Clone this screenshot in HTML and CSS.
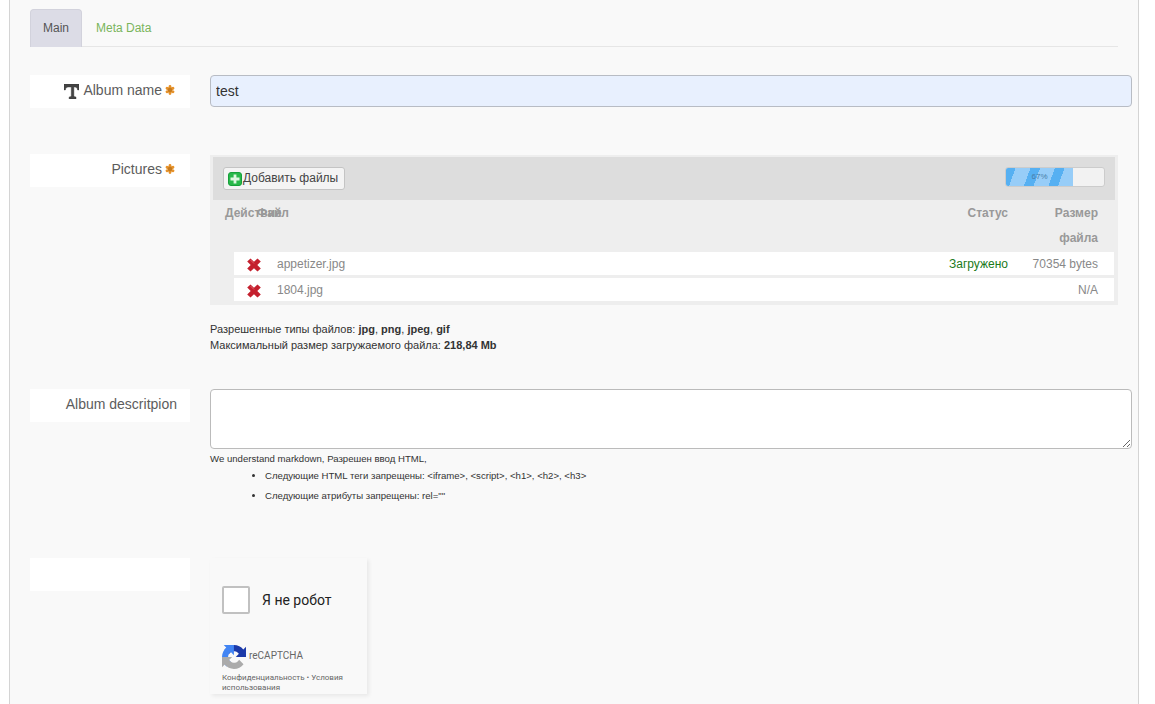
FILE: index.html
```html
<!DOCTYPE html>
<html lang="en">
<head>
<meta charset="utf-8">
<title>Album</title>
<link rel="stylesheet" href="styles.css">
</head>
<body>
<svg class="defs" aria-hidden="true">
  <defs>
    <symbol id="req" viewBox="0 0 10 10">
      <g stroke="#e6922a" stroke-width="2.800" stroke-linecap="round"><path d="M5 1.500v7M2 3.200l6 3.600M8 3.200l-6 3.600"/></g>
      <circle cx="5" cy="5" r="2.200" fill="#c47a20"/>
    </symbol>
    <symbol id="del" viewBox="0 0 14 14">
      <path d="M3.500.5 7 3.700 10.500.5 13.800 3.500 10.300 7l3.500 3.500-3.300 3L7 10.300l-3.500 3.200-3.300-3L3.700 7 .2 3.500z" fill="#c4202e"/>
      <path d="M3.500 2 7 5.500" stroke="#e0606a" stroke-width="1"/>
    </symbol>
  </defs>
</svg>
<main class="panel">
  <nav class="tabs">
    <a class="tab active">Main</a>
    <a class="tab">Meta Data</a>
  </nav>

  <section class="row row-name">
    <div class="label">
      <svg class="t-icon" viewBox="1 1 14 14"><path d="M1 1h14v5.500h-1.300c-.3-1.800-1-2.700-2.700-2.700h-.8V12c0 .7.500 1.100 2 1.100V15H5.800v-1.900c1.500 0 2-.4 2-1.100V3.800H5c-1.700 0-2.400.9-2.700 2.700H1z" stroke="#333" stroke-width=".4"/></svg>
      <span>Album name</span>
      <svg class="req"><use href="#req"/></svg>
    </div>
    <div class="field"><input class="text-input" type="text" value="test"></div>
  </section>

  <section class="row row-pictures">
    <div class="label">
      <span>Pictures</span>
      <svg class="req"><use href="#req"/></svg>
    </div>
    <div class="field">
      <div class="uploader">
        <div class="toolbar">
          <button class="add-btn" type="button">
            <svg class="plus" viewBox="0 0 14 14"><rect x=".5" y=".5" width="13" height="13" rx="2.500" fill="#28b84a" stroke="#16a03a"/><path d="M7 2.500v9M2.500 7h9" stroke="#dff7e2" stroke-width="2.800"/></svg>
            <span>Добавить файлы</span>
          </button>
          <div class="progress">
            <div class="progress-fill"><span>67%</span></div>
          </div>
        </div>
        <div class="file-head">
          <div class="h-action">Действие</div>
          <div class="h-file">Файл</div>
          <div class="h-status">Статус</div>
          <div class="h-size">Размер файла</div>
        </div>
        <div class="file-row">
          <svg class="del"><use href="#del"/></svg>
          <div class="f-name">appetizer.jpg</div>
          <div class="f-status">Загружено</div>
          <div class="f-size">70354 bytes</div>
        </div>
        <div class="file-row">
          <svg class="del"><use href="#del"/></svg>
          <div class="f-name">1804.jpg</div>
          <div class="f-status"></div>
          <div class="f-size">N/A</div>
        </div>
      </div>
      <p class="hint">Разрешенные типы файлов: <b>jpg</b>, <b>png</b>, <b>jpeg</b>, <b>gif</b><br>Максимальный размер загружаемого файла: <b>218,84 Mb</b></p>
    </div>
  </section>

  <section class="row row-desc">
    <div class="label label-wide"><span>Album descritpion</span></div>
    <div class="field">
      <textarea class="text-area"></textarea>
      <p class="note">We understand markdown, Разрешен ввод HTML,</p>
      <ul class="rules">
        <li>Следующие HTML теги запрещены: &lt;iframe&gt;, &lt;script&gt;, &lt;h1&gt;, &lt;h2&gt;, &lt;h3&gt;</li>
        <li>Следующие атрибуты запрещены: rel=""</li>
      </ul>
    </div>
  </section>

  <section class="row row-captcha">
    <div class="label"></div>
    <div class="field">
      <div class="captcha">
        <div class="captcha-check">
          <span class="checkbox"></span>
          <span class="captcha-text">Я не робот</span>
        </div>
        <div class="captcha-brand">
          <svg class="rc-logo" viewBox="0 0 64 64">
            <path d="M64 31.955l-.033-1.37V4.687l-7.16 7.16C50.948 4.674 42.033.093 32.05.093c-10.4 0-19.622 4.96-25.458 12.64l11.736 11.860a15.550 15.550 0 0 1 4.754-5.334c2.050-1.600 4.952-2.906 8.968-2.906.485 0 .86.057 1.135.163 4.976.393 9.288 3.140 11.828 7.124l-8.307 8.307c10.522-.04 22.400-.066 27.295.005" fill="#1c3aa9"/>
            <path d="M31.862.001l-1.370.033H4.594l7.160 7.160C4.580 13.053 0 21.968 0 31.950c0 10.400 4.960 19.622 12.640 25.458l11.860-11.736a15.550 15.550 0 0 1-5.334-4.754c-1.600-2.050-2.906-4.952-2.906-8.968 0-.485.057-.86.163-1.135.393-4.976 3.140-9.288 7.124-11.828l8.307 8.307c-.04-10.522-.066-22.400.005-27.295" fill="#4285f4"/>
            <path d="M.001 32l.033 1.370v25.898l7.160-7.160c5.860 7.173 14.774 11.754 24.757 11.754 10.400 0 19.622-4.960 25.458-12.640l-11.736-11.860a15.550 15.550 0 0 1-4.754 5.334c-2.050 1.600-4.952 2.906-8.968 2.906-.485 0-.86-.057-1.135-.163-4.976-.393-9.288-3.140-11.828-7.124l8.307-8.307c-10.522.04-22.400.066-27.295-.005" fill="#ababab"/>
          </svg>
          <span class="rc-name">reCAPTCHA</span>
        </div>
        <div class="captcha-terms">Конфиденциальность • Условия использования</div>
      </div>
    </div>
  </section>
</main>
</body>
</html>
```

FILE: styles.css
```css
* { box-sizing: border-box; }
html, body { margin: 0; height: 100%; overflow: hidden; background: #fff; }
body { font-family: "Liberation Sans", Arial, sans-serif; color: #333; }
.defs { display: none; }

.panel {
  width: 1130px;
  height: 704px;
  margin-left: 9px;
  padding: 9px 6px 0 20px;
  background: #f9f9f9;
  border-left: 1px solid #d4d4d4;
  border-right: 1px solid #d4d4d4;
}

.tabs {
  display: flex;
  width: 1088px;
  height: 38px;
  border-bottom: 1px solid #e6e6e6;
}
.tab {
  height: 38px;
  padding: 12px 13px 0;
  font-size: 12px;
  line-height: 14px;
  color: #7ab55c;
  border-radius: 4px 4px 0 0;
}
.tab.active {
  color: #555;
  background: #dcdce6;
  border: 1px solid #d2d2dc;
  border-bottom: 0;
  padding: 11px 12px 0;
}
.tab + .tab { margin-left: 1px; }

.row { display: flex; gap: 20px; align-items: flex-start; }
.row-name { margin-top: 28px; }
.row-pictures { margin-top: 46px; }
.row-desc { margin-top: 36px; }

.label {
  flex: 0 0 160px;
  height: 33px;
  padding: 7px 15px 0 0;
  display: flex;
  justify-content: flex-end;
  align-items: flex-start;
  background: #fff;
  font-size: 14px;
  line-height: 16px;
  color: #5c5c5c;
}
.label-wide { padding-right: 13px; }
.t-icon { width: 15px; height: 15px; margin: 2px 4px 0 0; fill: #444; }
.req { width: 10px; height: 10px; margin: 3px 0 0 3px; }

.field { flex: 1; min-width: 0; }

.text-input {
  display: block;
  width: 922px;
  height: 32px;
  padding: 0 5px;
  font: 14px "Liberation Sans", Arial, sans-serif;
  color: #333;
  background: #e8f0fe;
  border: 1px solid #b8bcc4;
  border-radius: 4px;
  outline: 0;
}

.uploader {
  width: 908px;
  margin-top: 1px;
  padding: 2px 3px 4px;
  background: #eee;
}
.toolbar {
  height: 43px;
  padding: 10px 10px 0;
  display: flex;
  justify-content: space-between;
  align-items: flex-start;
  background: #ddd;
}
.add-btn {
  display: flex;
  align-items: center;
  width: 122px;
  height: 23px;
  padding: 0 0 0 4px;
  font: 12px "Liberation Sans", Arial, sans-serif;
  color: #444;
  background: #f4f4f4;
  border: 1px solid #c4c4c4;
  border-radius: 3px;
}
.add-btn span { margin-bottom: 2px; }
.plus { width: 14px; height: 14px; margin-right: 1px; }
.progress {
  width: 100px;
  height: 20px;
  background: #f2f2f2;
  border: 1px solid #ccc;
  border-radius: 3px;
  overflow: hidden;
}
.progress-fill {
  width: 68.500%;
  height: 100%;
  font-size: 8px;
  line-height: 18px;
  text-align: center;
  color: #4a7ea8;
  background: repeating-linear-gradient(110deg, #56b0f2 0, #56b0f2 9px, #97cdf8 9px, #97cdf8 23px);
}

.file-head {
  height: 52px;
  padding: 1px 0 0 12px;
  display: grid;
  grid-template-columns: 32px 668px 83px 90px;
  font-size: 12px;
  font-weight: bold;
  line-height: 25px;
  color: #999;
}
.h-action { white-space: nowrap; }
.h-file { white-space: nowrap; }
.h-status { text-align: right; }
.h-size { text-align: right; padding-left: 25px; }

.file-row {
  height: 23px;
  margin: 0 1px 3px 21px;
  padding-left: 13px;
  display: grid;
  grid-template-columns: 30px 641px 90px 1fr;
  align-items: center;
  background: #fff;
  font-size: 12px;
  color: #888;
}
.file-row:last-child { margin-bottom: 0; }
.del { width: 14px; height: 14px; margin-top: 2px; }
.f-status { text-align: right; color: #1a7a1a; white-space: nowrap; }
.f-size { text-align: right; padding-right: 16px; }

.hint {
  margin: 16px 0 0;
  font-size: 11px;
  line-height: 16px;
  color: #333;
}

.text-area {
  display: block;
  width: 922px;
  height: 60px;
  background: #fff;
  border: 1px solid #bbb;
  border-radius: 4px;
  outline: 0;
}
.note {
  margin: 4px 0 0;
  font-size: 9.600px;
  line-height: 11px;
  color: #333;
}
.rules {
  margin: 6px 0 0;
  padding-left: 55px;
  font-size: 9.600px;
  line-height: 11px;
  color: #333;
}
.rules li { margin-bottom: 9px; }

.row-captcha { padding-top: 48px; }

.captcha {
  width: 157px;
  height: 136px;
  padding-left: 12px;
  background: #f9f9f9;
  box-shadow: 2px 2px 4px rgba(0,0,0,.07);
}
.captcha-check {
  display: flex;
  align-items: center;
  gap: 12px;
  padding-top: 28px;
}
.checkbox {
  width: 28px;
  height: 28px;
  background: #fff;
  border: 2px solid #c1c1c1;
  border-radius: 2px;
}
.captcha-text { font: 14px Roboto, sans-serif; color: #222; }
.captcha-brand {
  display: flex;
  align-items: flex-start;
  gap: 3px;
  margin-top: 31px;
}
.rc-logo { width: 24px; height: 24px; }
.rc-name { font: 10px/12px Roboto, sans-serif; color: #666; margin-top: 5px; }
.captcha-terms {
  margin-top: 4px;
  width: 130px;
  font: 8px/10px Roboto, sans-serif;
  color: #666;
}
```
